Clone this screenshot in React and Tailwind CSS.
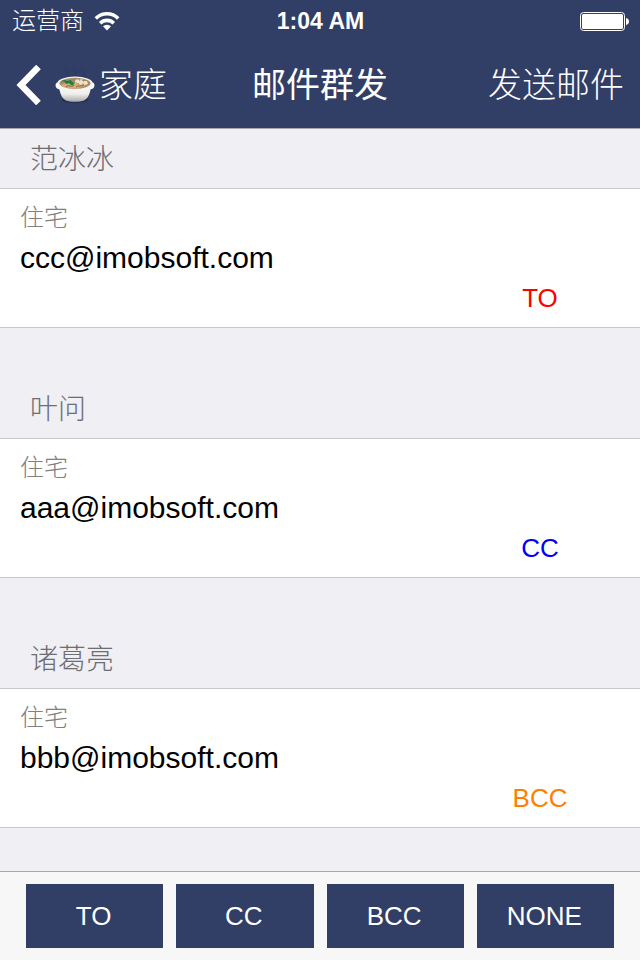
import { useState } from 'react';

const initialContacts = [
    { id: 1, name: '范冰冰', label: '住宅', email: 'ccc@imobsoft.com', type: 'TO' },
    { id: 2, name: '叶问', label: '住宅', email: 'aaa@imobsoft.com', type: 'CC' },
    { id: 3, name: '诸葛亮', label: '住宅', email: 'bbb@imobsoft.com', type: 'BCC' },
];

const typeColors = {
    TO: 'text-[#ff0000]',
    CC: 'text-[#0000ff]',
    BCC: 'text-[#ff8000]',
    NONE: 'text-transparent',
};

const WifiIcon = () => (
    <svg className="w-[26px] h-[20px]" viewBox="0 0 26 20" fill="none" stroke="#fff" strokeWidth="3.6" aria-hidden="true">
        <path d="M1.8 7.4a15.8 15.8 0 0 1 22.4 0" />
        <path d="M6.200 12.200a9.600 9.600 0 0 1 13.600 0" />
        <path d="M13 19.500l-4-4.200a5.700 5.700 0 0 1 8 0z" fill="#fff" stroke="none" />
    </svg>
);

const BatteryIcon = () => (
    <svg className="w-[49px] h-[19px]" viewBox="0 0 49 19" aria-hidden="true">
        <rect x="0.5" y="0.5" width="44" height="18" rx="3" fill="none" stroke="#fff" />
        <rect x="2" y="2" width="41" height="15" rx="1.5" fill="#fff" />
        <path d="M46 6c2 .4 3 1.7 3 3.5S48 12.600 46 13z" fill="#fff" />
    </svg>
);

const BowlIcon = () => (
    <svg className="w-[40px] h-[40px]" viewBox="0 0 40 40" aria-hidden="true">
        <defs>
            <linearGradient id="bowl" x1="0" y1="0" x2="0" y2="1">
                <stop offset="0" stopColor="#ffffff" />
                <stop offset="0.6" stopColor="#efeeec" />
                <stop offset="1" stopColor="#a9a8a8" />
            </linearGradient>
        </defs>
        <path d="M12 3c-3 4 3 5 1 9M20 3c-3 4 3 5 1 9M28 3c-3 4 3 5 1 9" fill="none" stroke="#2b3553" strokeWidth="1.5" opacity="0.3" />
        <ellipse cx="20" cy="34.500" rx="13" ry="3.500" fill="#1f2947" opacity="0.7" />
        <path d="M.5 20c0-2 2-3 4-3h31c2 0 4 1 4 3 0 3-2 4-4 4.500-1 6-3.500 9.500-6.500 11-4 1.800-14 1.800-18 0-3-1.500-5.500-5-6.500-11-2-.5-4-1.500-4-4.500z" fill="url(#bowl)" />
        <ellipse cx="20" cy="18" rx="17.500" ry="6.500" fill="#f4f3f0" />
        <ellipse cx="20" cy="18.300" rx="15.500" ry="5.500" fill="#a98a63" />
        <path d="M6 20c5-3 9 0 13-2s8-1 12 2c-5 4-19 5-25 0z" fill="#d6ad7b" />
        <path d="M11 21.500c3-2 5 1 8-1M21 22c2-2 5 0 8-2" fill="none" stroke="#8d6335" />
        <path d="M20 16c1-2 3-2 4-1l3-1 1 2 4 0 1 3-3 1-2-2-2 2-3-2-2 1z" fill="#ebe4c9" />
        <path d="M21 18l3 1M27 15l2 2M24 14l1 2" stroke="#a7a086" />
        <path d="M6 16l4-1 2 1 4-1 1 2 3 1-2 1 1 1-3 0-2-2-3 1-1-2z" fill="#168049" />
    </svg>
);

const ContactSection = ({ contact, selected, onSelect }) => (
    <section className="mb-[51px] last:mb-0">
        <h2 className="h-[59px] px-[30px] pt-0.5 flex items-center text-[28px] font-light text-[#6d6d72]">
            {contact.name}
        </h2>
        <button
            type="button"
            aria-pressed={selected}
            onClick={() => onSelect(contact.id)}
            className="block w-full bg-white border-y border-[#c8c7cc] px-5 py-2 text-left"
        >
            <span className="block text-[24px] leading-[42px] font-light text-[#808080]">{contact.label}</span>
            <span className="block text-[30px] leading-[38px] text-black">{contact.email}</span>
            <span className={`block w-[160px] ml-auto text-center text-[26px] leading-[42px] ${typeColors[contact.type]}`}>
                {contact.type}
            </span>
        </button>
    </section>
);

const App = () => {
    const [contacts, setContacts] = useState(initialContacts);
    const [selectedId, setSelectedId] = useState(null);

    // With no row selected the type is applied to everyone
    const applyType = (type) => {
        setContacts(contacts.map((c) => (
            selectedId === null || c.id === selectedId ? { ...c, type } : c
        )));
    };

    return (
        <div className="min-h-screen flex flex-col bg-[#efeff4] font-['Liberation_Sans','Noto_Sans_CJK_SC',sans-serif]">
            <header className="bg-[#313e66] text-white border-b border-[#a7a7aa]">
                <div className="h-10 pl-3 pr-[11px] pt-0.5 grid grid-cols-[1fr_auto_1fr] items-center">
                    <div className="flex items-center gap-[10px] text-[24px] font-light">
                        <span>运营商</span>
                        <WifiIcon />
                    </div>
                    <span className="text-[23px] font-bold">1:04 AM</span>
                    <div className="flex justify-end">
                        <BatteryIcon />
                    </div>
                </div>
                <nav className="h-[88px] px-4 pt-0.5 grid grid-cols-[1fr_auto_1fr] items-center text-[34px]">
                    <button type="button" className="flex items-center font-light">
                        <svg className="w-[25px] h-[40px] mr-[14px]" viewBox="0 0 25 40" fill="none" stroke="#fff" strokeWidth="6.500" aria-hidden="true">
                            <path d="M22.500 2L5 20L22.500 38" />
                        </svg>
                        <BowlIcon />
                        <span className="ml-1">家庭</span>
                    </button>
                    <h1 className="font-normal">邮件群发</h1>
                    <button type="button" className="justify-self-end font-light">发送邮件</button>
                </nav>
            </header>

            <main className="flex-1 pb-10">
                {contacts.map((contact) => (
                    <ContactSection
                        key={contact.id}
                        contact={contact}
                        selected={contact.id === selectedId}
                        onSelect={setSelectedId}
                    />
                ))}
            </main>

            <footer className="bg-[#f7f7f7] border-t border-[#a7a7aa] px-[26px] py-3 grid grid-cols-4 gap-[13px]">
                {['TO', 'CC', 'BCC', 'NONE'].map((type) => (
                    <button
                        key={type}
                        type="button"
                        onClick={() => applyType(type)}
                        className="h-16 pr-0.5 bg-[#313e66] text-white text-[26px]"
                    >
                        {type}
                    </button>
                ))}
            </footer>
        </div>
    );
};

export default App;
